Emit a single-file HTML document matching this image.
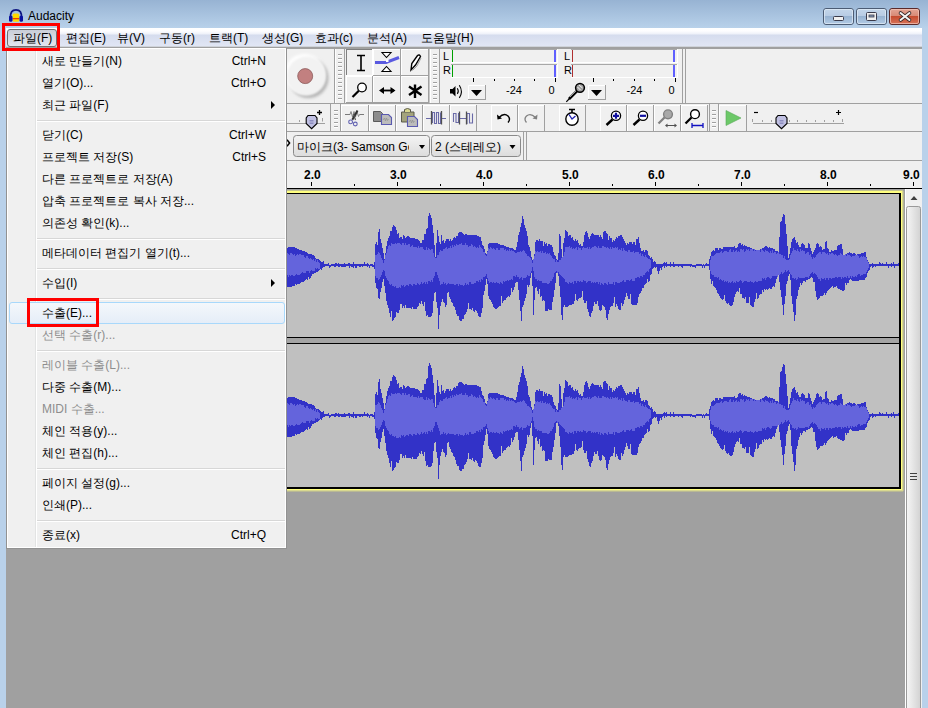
<!DOCTYPE html>
<html><head><meta charset="utf-8">
<style>
*{margin:0;padding:0;box-sizing:border-box}
html,body{width:928px;height:708px;overflow:hidden;background:#a0a0a0}
body{position:relative;font-family:"Liberation Sans",sans-serif;font-size:12px;color:#000}
.a{position:absolute}
svg text{font-family:"Liberation Sans",sans-serif}
#title{left:0;top:0;width:928px;height:28px;background:linear-gradient(#97b3d3,#b8d1ea)}
#lframe{left:0;top:28px;width:6px;height:680px;background:#b9d1ea}
#rframe{left:922px;top:28px;width:6px;height:680px;background:#b9d1ea}
#menubar{left:6px;top:28px;width:916px;height:21px;background:linear-gradient(#ffffff 0,#fdfdff 3px,#eef1f9 6px,#d5dcee 7px,#e1e6f4 18px,#cfd3da 18px,#cfd3da 19px,#a0a0a0 19px)}
.mi{position:absolute;top:31px;height:16px;line-height:15px;font-size:12px;white-space:nowrap}
#menu{left:6px;top:48px;width:281px;height:501px;background:#f0f0f0;border:1px solid #929292;border-top:none;box-shadow:inset 1px 1px 0 #fff,inset -1px -1px 0 #fff}
.it{position:absolute;left:35px;height:22px;line-height:22px;white-space:nowrap}
.sc{position:absolute;right:20px;height:22px;line-height:22px;text-align:right}
.dis{color:#8d8d8d}
.sep{position:absolute;left:30px;width:248px;height:2px;border-top:1px solid #d7d7d7;border-bottom:1px solid #fff}
.red{position:absolute;border:3px solid #f00}
</style></head><body>
<div id="title" class="a"></div>
<div id="lframe" class="a"></div>
<div id="rframe" class="a"></div>
<div class="a" style="left:28px;top:9px;font-size:12px;line-height:14px">Audacity</div>
<div id="menubar" class="a"></div>

<svg class="a" style="left:0;top:0" width="928" height="708" viewBox="0 0 928 708">
<defs>
 <linearGradient id="gbtn" x1="0" y1="0" x2="0" y2="1"><stop offset="0" stop-color="#f4f4f4"/><stop offset="1" stop-color="#dcdcdc"/></linearGradient>
 <linearGradient id="gthumb" x1="0" y1="0" x2="1" y2="0"><stop offset="0" stop-color="#f6f6f6"/><stop offset="1" stop-color="#d2d2d2"/></linearGradient>
 <radialGradient id="grec" cx="0.5" cy="0.5" r="0.5"><stop offset="0.72" stop-color="#f0f0f0"/><stop offset="0.86" stop-color="#c8c8c8"/><stop offset="1" stop-color="#f0f0f0"/></radialGradient>
 <radialGradient id="gdot" cx="0.4" cy="0.35" r="0.7"><stop offset="0" stop-color="#d89a9a"/><stop offset="1" stop-color="#b06464"/></radialGradient>
 <filter id="blur1" x="-30%" y="-30%" width="160%" height="160%"><feGaussianBlur stdDeviation="0.9"/></filter>
 <filter id="blur2" x="-30%" y="-30%" width="160%" height="160%"><feGaussianBlur stdDeviation="1.6"/></filter>
 <linearGradient id="gwb" x1="0" y1="0" x2="0" y2="1"><stop offset="0" stop-color="#c4d6ea"/><stop offset="0.45" stop-color="#b8cce4"/><stop offset="0.46" stop-color="#95b1d0"/><stop offset="1" stop-color="#b4cce6"/></linearGradient>
 <linearGradient id="gwc" x1="0" y1="0" x2="0" y2="1"><stop offset="0" stop-color="#e4a696"/><stop offset="0.45" stop-color="#d88a76"/><stop offset="0.46" stop-color="#c4482c"/><stop offset="1" stop-color="#d8765c"/></linearGradient>
</defs>
<!-- title buttons -->
<rect x="823.5" y="8.5" width="30" height="16" rx="2.5" fill="url(#gwb)" stroke="#4c5c74"/>
<rect x="824.5" y="9.5" width="28" height="14" rx="1.5" fill="none" stroke="#e2ecf6" stroke-opacity="0.7"/>
<rect x="833.5" y="16.5" width="10" height="4" rx="1" fill="#f0f0f0" stroke="#3a3a4a"/>
<rect x="856.5" y="8.5" width="30" height="16" rx="2.5" fill="url(#gwb)" stroke="#4c5c74"/>
<rect x="857.5" y="9.5" width="28" height="14" rx="1.5" fill="none" stroke="#e2ecf6" stroke-opacity="0.7"/>
<rect x="866.5" y="12.5" width="10" height="8" rx="1" fill="#f0f0f0" stroke="#3a3a4a"/>
<rect x="869" y="15" width="5" height="2" fill="#8aa0c0" stroke="#3a3a4a" stroke-width="0.8"/>
<rect x="889.5" y="8.5" width="30" height="16" rx="2.5" fill="url(#gwc)" stroke="#5a2a2a"/>
<rect x="890.5" y="9.5" width="28" height="14" rx="1.5" fill="none" stroke="#f2c8bc" stroke-opacity="0.7"/>
<path d="M900.5 13l9 7 M909.5 13l-9 7" stroke="#3a2a2a" stroke-width="3.6" stroke-linecap="round"/>
<path d="M900.5 13l9 7 M909.5 13l-9 7" stroke="#f4f4f4" stroke-width="2" stroke-linecap="round"/>
<!-- app icon -->
<path d="M10.5 18 Q10 9.8 16 9.8 Q22 9.8 21.5 18" fill="none" stroke="#0c1480" stroke-width="1.8"/>
<rect x="12.6" y="13.5" width="6.6" height="8.2" rx="1.5" fill="#ffd800"/>
<rect x="12.6" y="18" width="6.6" height="1.3" fill="#f03c00"/>
<rect x="9" y="15.5" width="3.5" height="6.2" rx="1.5" fill="#0a12a0"/>
<rect x="19.5" y="15.5" width="3.5" height="6.2" rx="1.5" fill="#0a12a0"/>
<!-- toolbar background -->
<rect x="6" y="49" width="916" height="112" fill="#f0f0f0"/>
<!-- row lines -->
<rect x="286" y="103" width="636" height="1" fill="#a0a0a0"/>
<rect x="286" y="131" width="636" height="1" fill="#a0a0a0"/>
<rect x="286" y="160" width="636" height="1" fill="#a0a0a0"/>

<!-- ROW 1 -->
<circle cx="308.5" cy="78" r="20" fill="#b4b4b4" filter="url(#blur2)"/>
<circle cx="304.5" cy="74" r="20" fill="#ffffff" filter="url(#blur2)"/>
<circle cx="306.5" cy="76" r="19.5" fill="#f2f2f2" filter="url(#blur1)"/>
<circle cx="305.2" cy="76.1" r="7.5" fill="#c28080" stroke="#8c5a5a" stroke-width="0.8"/>
<rect x="334" y="49" width="1" height="54" fill="#a0a0a0"/>
<rect x="335" y="49" width="1" height="54" fill="#fff"/>
<path d="M338 55h4v1h-4zM338 59h4v1h-4zM338 63h4v1h-4zM338 67h4v1h-4zM338 71h4v1h-4zM338 75h4v1h-4zM338 79h4v1h-4zM338 83h4v1h-4zM338 87h4v1h-4zM338 91h4v1h-4zM338 95h4v1h-4zM338 99h4v1h-4z" fill="#fff"/><path d="M338 54h4v1h-4zM338 58h4v1h-4zM338 62h4v1h-4zM338 66h4v1h-4zM338 70h4v1h-4zM338 74h4v1h-4zM338 78h4v1h-4zM338 82h4v1h-4zM338 86h4v1h-4zM338 90h4v1h-4zM338 94h4v1h-4zM338 98h4v1h-4z" fill="#a0a0a0"/>
<rect x="344" y="49" width="1" height="54" fill="#a0a0a0"/>
<!-- tools -->
<rect x="346" y="49" width="26" height="1" fill="#808080"/><rect x="346" y="49" width="1" height="26" fill="#808080"/><rect x="346" y="75" width="27" height="1" fill="#fff"/><rect x="372" y="49" width="1" height="27" fill="#fff"/><rect x="373" y="49" width="27" height="1" fill="#fff"/><rect x="373" y="49" width="1" height="26" fill="#fff"/><rect x="373" y="75" width="28" height="1" fill="#a0a0a0"/><rect x="400" y="49" width="1" height="27" fill="#a0a0a0"/><rect x="401" y="49" width="27" height="1" fill="#fff"/><rect x="401" y="49" width="1" height="26" fill="#fff"/><rect x="401" y="75" width="28" height="1" fill="#a0a0a0"/><rect x="428" y="49" width="1" height="27" fill="#a0a0a0"/><rect x="346" y="76" width="26" height="1" fill="#fff"/><rect x="346" y="76" width="1" height="26" fill="#fff"/><rect x="346" y="102" width="27" height="1" fill="#a0a0a0"/><rect x="372" y="76" width="1" height="27" fill="#a0a0a0"/><rect x="373" y="76" width="27" height="1" fill="#fff"/><rect x="373" y="76" width="1" height="26" fill="#fff"/><rect x="373" y="102" width="28" height="1" fill="#a0a0a0"/><rect x="400" y="76" width="1" height="27" fill="#a0a0a0"/><rect x="401" y="76" width="27" height="1" fill="#fff"/><rect x="401" y="76" width="1" height="26" fill="#fff"/><rect x="401" y="102" width="28" height="1" fill="#a0a0a0"/><rect x="428" y="76" width="1" height="27" fill="#a0a0a0"/>
<!-- I beam -->
<path d="M357 55.5h8 M357 70.5h8 M361 55.5v15" stroke="#000" stroke-width="1.6" fill="none"/>
<!-- envelope -->
<path d="M382 52.5h9l-4.5 5z M382 71.5h9l-4.5-5z" fill="#fff" stroke="#000" stroke-width="1.1"/>
<path d="M375 62.5 H386 L399 57.5" stroke="#5a5ae0" stroke-width="3" fill="none"/>
<rect x="386" y="59.5" width="2.5" height="2.5" fill="#fff"/>
<!-- pencil -->
<path d="M411 70 L411.8 63.5 L417.5 55.5 Q419.5 54 420.5 56.5 L415.5 65 Z" fill="#fff" stroke="#000" stroke-width="1.4"/>
<path d="M412.5 70.5 L417 66 L421 58" stroke="#909090" stroke-width="0.8" fill="none"/>
<!-- zoom -->
<circle cx="362" cy="87.5" r="4.3" fill="#fff" stroke="#000" stroke-width="1.3"/>
<path d="M352.5 97 L358.8 90.7" stroke="#000" stroke-width="2.2"/>
<!-- timeshift -->
<path d="M381 90.5h13" stroke="#000" stroke-width="1.8"/>
<path d="M379 90.5l5-3.5v7z M395.5 90.5l-5-3.5v7z" fill="#000"/>
<!-- multi -->
<path d="M415 84.5v13.5 M409 86.5l12.5 8.5 M421.5 86.5l-12.5 8.5" stroke="#000" stroke-width="2.4"/>
<rect x="428" y="49" width="1.5" height="54" fill="#a0a0a0"/>
<rect x="430" y="49" width="1" height="54" fill="#fff"/>
<path d="M433 55h4v1h-4zM433 59h4v1h-4zM433 63h4v1h-4zM433 67h4v1h-4zM433 71h4v1h-4zM433 75h4v1h-4zM433 79h4v1h-4zM433 83h4v1h-4zM433 87h4v1h-4zM433 91h4v1h-4zM433 95h4v1h-4zM433 99h4v1h-4z" fill="#fff"/><path d="M433 54h4v1h-4zM433 58h4v1h-4zM433 62h4v1h-4zM433 66h4v1h-4zM433 70h4v1h-4zM433 74h4v1h-4zM433 78h4v1h-4zM433 82h4v1h-4zM433 86h4v1h-4zM433 90h4v1h-4zM433 94h4v1h-4zM433 98h4v1h-4z" fill="#a0a0a0"/>
<rect x="439" y="49" width="1" height="54" fill="#a0a0a0"/>
<!-- meters -->
<g font-size="11px" fill="#000">
 <text x="443" y="60">L</text><text x="443" y="74">R</text>
 <text x="564" y="60">L</text><text x="564" y="74">R</text>
 <text x="506" y="93.5">-24</text><text x="548.5" y="93.5">0</text>
 <text x="626.5" y="93.5">-24</text><text x="668.5" y="93.5">0</text>
</g>
<g>
 <rect x="451" y="49" width="107" height="1" fill="#a8a8a8"/><rect x="451" y="62" width="107" height="1" fill="#fff"/>
 <rect x="451" y="64" width="107" height="1" fill="#a8a8a8"/><rect x="451" y="77" width="107" height="1" fill="#fff"/>
 <rect x="557" y="49" width="1" height="14" fill="#fff"/><rect x="557" y="64" width="1" height="14" fill="#fff"/>
 <rect x="452" y="50" width="1" height="12" fill="#00a000"/>
 <rect x="452" y="65" width="1" height="12" fill="#00a000"/>
 <rect x="554" y="50" width="2" height="12" fill="#6060ff"/>
 <rect x="554" y="65" width="2" height="12" fill="#6060ff"/>
 <rect x="571" y="49" width="107" height="1" fill="#a8a8a8"/><rect x="571" y="62" width="107" height="1" fill="#fff"/>
 <rect x="571" y="64" width="107" height="1" fill="#a8a8a8"/><rect x="571" y="77" width="107" height="1" fill="#fff"/>
 <rect x="677" y="49" width="1" height="14" fill="#fff"/><rect x="677" y="64" width="1" height="14" fill="#fff"/>
 <rect x="572" y="50" width="1" height="12" fill="#b03030"/>
 <rect x="572" y="65" width="1" height="12" fill="#b03030"/>
 <rect x="673" y="50" width="2" height="12" fill="#6060ff"/>
 <rect x="673" y="65" width="2" height="12" fill="#6060ff"/>
</g>
<g fill="#000">
 <rect x="473" y="78" width="1" height="4"/><rect x="494" y="79" width="1" height="2"/><rect x="514" y="79" width="1" height="2"/><rect x="534" y="79" width="1" height="2"/><rect x="555" y="78" width="1" height="4"/>
 <rect x="593" y="78" width="1" height="4"/><rect x="613" y="79" width="1" height="2"/><rect x="634" y="79" width="1" height="2"/><rect x="654" y="79" width="1" height="2"/><rect x="675" y="78" width="1" height="4"/>
</g>
<!-- speaker -->
<path d="M450 89h2.5l3-3v10.5l-3-3H450z" fill="#000"/>
<path d="M457.3 88.3q2 3 0 5.6 M459.3 85.3q4.2 6.5 0 12.6" stroke="#000" stroke-width="1.1" fill="none"/>
<!-- dropdown buttons -->
<rect x="468" y="85" width="18" height="15" fill="#f0f0f0"/>
<path d="M468.5 99v-13.5h17" stroke="#fff" stroke-width="1" fill="none"/>
<path d="M468 99.5h18 M485.5 85v15" stroke="#a0a0a0" stroke-width="1"/>
<path d="M471 90h11l-5.5 6z" fill="#000"/>
<rect x="588" y="85" width="18" height="15" fill="#f0f0f0"/>
<path d="M588.5 99v-13.5h17" stroke="#fff" stroke-width="1" fill="none"/>
<path d="M588 99.5h18 M605.5 85v15" stroke="#a0a0a0" stroke-width="1"/>
<path d="M591 90h11l-5.5 6z" fill="#000"/>
<!-- mic -->
<path d="M566.3 101.8 L570 98" stroke="#000" stroke-width="1.2"/>
<path d="M569 99 L577 91" stroke="#000" stroke-width="2.6"/>
<path d="M570 97 L576 91" stroke="#fff" stroke-width="0.6"/>
<circle cx="580" cy="87.8" r="4.4" fill="#a0a0a0" stroke="#000" stroke-width="1.5"/>
<path d="M577.5 87l3 3 M579 85l3.5 3" stroke="#fff" stroke-width="0.9"/>
<rect x="682" y="49" width="1" height="54" fill="#a0a0a0"/>
<rect x="685" y="49" width="1" height="54" fill="#a0a0a0"/>

<!-- ROW 2 -->
<path d="M287 123.5h38" stroke="#a0a0a0" stroke-width="1"/>
<path d="M299.5 120v2 M322.5 118v3.5" stroke="#a0a0a0"/>
<path d="M308 115.5 h7 l2 2.5 v5.5 l-5.4 5.2 l-5.4-5.2 v-5.5z" fill="#c0c0e2" stroke="#000" stroke-width="1.1"/>
<path d="M309.5 120.5h4 M309.5 122h4 M309.5 123.5h4" stroke="#8080b8" stroke-width="0.8"/>
<path d="M317 112.5h5 M319.5 110v5" stroke="#000" stroke-width="1.3"/>
<rect x="330" y="104" width="1" height="27" fill="#a0a0a0"/>
<path d="M334 111h4v1h-4zM334 115h4v1h-4zM334 119h4v1h-4zM334 123h4v1h-4zM334 127h4v1h-4z" fill="#fff"/><path d="M334 110h4v1h-4zM334 114h4v1h-4zM334 118h4v1h-4zM334 122h4v1h-4zM334 126h4v1h-4z" fill="#a0a0a0"/>
<rect x="340" y="104" width="1" height="27" fill="#a0a0a0"/>
<rect x="341" y="105" width="27" height="1" fill="#fff"/><rect x="341" y="105" width="1" height="26" fill="#fff"/><rect x="341" y="131" width="28" height="1" fill="#a0a0a0"/><rect x="368" y="105" width="1" height="27" fill="#a0a0a0"/><rect x="369" y="105" width="26" height="1" fill="#fff"/><rect x="369" y="105" width="1" height="26" fill="#fff"/><rect x="369" y="131" width="27" height="1" fill="#a0a0a0"/><rect x="395" y="105" width="1" height="27" fill="#a0a0a0"/><rect x="396" y="105" width="26" height="1" fill="#fff"/><rect x="396" y="105" width="1" height="26" fill="#fff"/><rect x="396" y="131" width="27" height="1" fill="#a0a0a0"/><rect x="422" y="105" width="1" height="27" fill="#a0a0a0"/><rect x="423" y="105" width="26" height="1" fill="#fff"/><rect x="423" y="105" width="1" height="26" fill="#fff"/><rect x="423" y="131" width="27" height="1" fill="#a0a0a0"/><rect x="449" y="105" width="1" height="27" fill="#a0a0a0"/><rect x="450" y="105" width="26" height="1" fill="#fff"/><rect x="450" y="105" width="1" height="26" fill="#fff"/><rect x="450" y="131" width="27" height="1" fill="#a0a0a0"/><rect x="476" y="105" width="1" height="27" fill="#a0a0a0"/><rect x="491" y="105" width="26" height="1" fill="#fff"/><rect x="491" y="105" width="1" height="26" fill="#fff"/><rect x="491" y="131" width="27" height="1" fill="#a0a0a0"/><rect x="517" y="105" width="1" height="27" fill="#a0a0a0"/><rect x="518" y="105" width="26" height="1" fill="#fff"/><rect x="518" y="105" width="1" height="26" fill="#fff"/><rect x="518" y="131" width="27" height="1" fill="#a0a0a0"/><rect x="544" y="105" width="1" height="27" fill="#a0a0a0"/><rect x="559" y="105" width="26" height="1" fill="#fff"/><rect x="559" y="105" width="1" height="26" fill="#fff"/><rect x="559" y="131" width="27" height="1" fill="#a0a0a0"/><rect x="585" y="105" width="1" height="27" fill="#a0a0a0"/><rect x="600" y="105" width="26" height="1" fill="#fff"/><rect x="600" y="105" width="1" height="26" fill="#fff"/><rect x="600" y="131" width="27" height="1" fill="#a0a0a0"/><rect x="626" y="105" width="1" height="27" fill="#a0a0a0"/><rect x="627" y="105" width="26" height="1" fill="#fff"/><rect x="627" y="105" width="1" height="26" fill="#fff"/><rect x="627" y="131" width="27" height="1" fill="#a0a0a0"/><rect x="653" y="105" width="1" height="27" fill="#a0a0a0"/><rect x="654" y="105" width="26" height="1" fill="#fff"/><rect x="654" y="105" width="1" height="26" fill="#fff"/><rect x="654" y="131" width="27" height="1" fill="#a0a0a0"/><rect x="680" y="105" width="1" height="27" fill="#a0a0a0"/><rect x="681" y="105" width="26" height="1" fill="#fff"/><rect x="681" y="105" width="1" height="26" fill="#fff"/><rect x="681" y="131" width="27" height="1" fill="#a0a0a0"/><rect x="707" y="105" width="1" height="27" fill="#a0a0a0"/><rect x="719" y="105" width="27" height="1" fill="#fff"/><rect x="719" y="105" width="1" height="26" fill="#fff"/><rect x="719" y="131" width="28" height="1" fill="#a0a0a0"/><rect x="746" y="105" width="1" height="27" fill="#a0a0a0"/><rect x="330" y="104" width="1" height="27" fill="#a0a0a0"/><rect x="340" y="104" width="1" height="27" fill="#a0a0a0"/><rect x="709" y="104" width="1" height="27" fill="#a0a0a0"/><rect x="718" y="104" width="1" height="27" fill="#a0a0a0"/>
<path d="M712 111h4v1h-4zM712 115h4v1h-4zM712 119h4v1h-4zM712 123h4v1h-4zM712 127h4v1h-4z" fill="#fff"/><path d="M712 110h4v1h-4zM712 114h4v1h-4zM712 118h4v1h-4zM712 122h4v1h-4zM712 126h4v1h-4z" fill="#a0a0a0"/>
<!-- cut -->
<path d="M345 114.5h5 M359.5 114.5h4.5" stroke="#7a7a7a" stroke-width="1"/>
<path d="M350 114.5 l1-3 l1.5 5.5 l1.5-5.5 l1.5 5.5 l1.5-5.5 l1.5 5 l1-2" stroke="#7a7a7a" stroke-width="0.9" fill="none"/>
<path d="M357.5 110.5 L352.3 119.8" stroke="#303030" stroke-width="2"/>
<path d="M353.5 114 L355.5 120" stroke="#505050" stroke-width="1.1"/>
<circle cx="350.6" cy="121.9" r="1.9" fill="none" stroke="#6060b0" stroke-width="1.1"/>
<circle cx="355.3" cy="124" r="1.9" fill="none" stroke="#6060b0" stroke-width="1.1"/>
<!-- copy -->
<path d="M373.5 111.5h7l2 2v8h-9z" fill="#8c8c8c" stroke="#5a5a5a" stroke-width="1"/>
<path d="M381.5 114.5h7l3 3v7h-10z" fill="#bcbcbc" stroke="#5a5ab0" stroke-width="1.1"/>
<path d="M383 120l1.5-2 1 3 1-3 1 2.5 1-1.5" stroke="#909090" stroke-width="0.7" fill="none"/>
<!-- paste -->
<path d="M401.5 112h12.5v10h-12.5z" fill="#a4a47c" stroke="#5a5a4a" stroke-width="1"/>
<path d="M404.5 112v-2.5q3-2 6 0v2.5" fill="#d8d890" stroke="#5a5a4a" stroke-width="1"/>
<path d="M407.5 116.5h7l3 3v7h-10z" fill="#bcbcbc" stroke="#5a5ab0" stroke-width="1.1"/>
<path d="M409 122l1.5-2 1 3 1-3 1 2.5 1-1.5" stroke="#909090" stroke-width="0.7" fill="none"/>
<!-- trim / silence -->
<g stroke="#6a6aa8" stroke-width="1.1" fill="none">
 <path d="M426 118.5h5.5 M441.5 118.5h4.5"/>
 <path d="M432.5 123 V112.5 H434.5 V123.5 H436.5 V112.5 H438.5 V123.5 H440.5 V112.5"/>
 <path d="M453.5 122 V113.5 H456 V122.5 H458.5 V113 M459.5 118.5H466.5 M467 124 V113.5 H469.5 V123 H472.5 V113.5"/>
</g>
<g stroke="#505050" stroke-width="1.3">
 <path d="M431.5 111v13.5 M441.5 111v13.5 M459.5 111.5v13 M466.5 111.5v13"/>
</g>
<!-- undo / redo -->
<path d="M499 117.5 q5-5 9-1.5 q3 3 0 6.5" stroke="#000" stroke-width="1.4" fill="none"/>
<path d="M497 114.5 l0.5 5 l4.5-1z" fill="#000"/>
<path d="M535.5 117.5 q-5-5 -9-1.5 q-3 3 0 6.5" stroke="#808080" stroke-width="1.3" fill="none"/>
<path d="M537.5 114.5 l-0.5 5 l-4.5-1z" fill="#808080"/>
<!-- timer -->
<circle cx="572" cy="119" r="6.2" fill="#fff" stroke="#000" stroke-width="1.4"/>
<path d="M569 109.5h6 M572 110v3" stroke="#000" stroke-width="1.6"/>
<path d="M569 114.5 l3 4.5 l3.5-3" stroke="#2020b0" stroke-width="1.3" fill="none"/>
<!-- zoom in -->
<g>
 <circle cx="616" cy="115.8" r="4.6" fill="#fff" stroke="#000" stroke-width="1.3"/>
 <path d="M606.5 125 L612.5 119.5" stroke="#000" stroke-width="2.4"/>
 <path d="M613 115.8h6 M616 112.8v6" stroke="#1010a0" stroke-width="2.2"/>
</g>
<g>
 <circle cx="643" cy="115.8" r="4.6" fill="#fff" stroke="#000" stroke-width="1.3"/>
 <path d="M633.5 125 L639.5 119.5" stroke="#000" stroke-width="2.4"/>
 <path d="M640 115.8h6" stroke="#1010a0" stroke-width="2.2"/>
</g>
<g>
 <circle cx="668" cy="114.3" r="4.4" fill="#a8a8a8" stroke="#808080" stroke-width="1.4"/>
 <path d="M658.5 123.5 L664.5 117.5" stroke="#808080" stroke-width="2.3"/>
 <path d="M666 125.5h10" stroke="#505050" stroke-width="1"/>
 <path d="M665 125.5l2.5-2v4z M677 125.5l-2.5-2v4z" fill="#505050"/>
</g>
<g>
 <circle cx="695" cy="114.2" r="4.4" fill="#fff" stroke="#000" stroke-width="1.4"/>
 <path d="M685.5 123.5 L691.5 117.5" stroke="#000" stroke-width="2.3"/>
 <path d="M692 125.5h11 M692 123v5 M703 123v5" stroke="#1010c0" stroke-width="1.3"/>
</g>
<!-- play at speed -->
<path d="M726 110.5 L741 118 L726 125.5z" fill="#6cc868" stroke="#58a858" stroke-width="0.6"/>
<path d="M753 123.5h91" stroke="#a0a0a0"/>
<path d="M752.5 119v3 M762.5 120v2 M771.5 120v2 M789.5 120v2 M797.5 120v2 M806.5 120v2 M815.5 120v2 M824.5 120v2 M833.5 120v2 M842.5 119v3" stroke="#a0a0a0"/>
<path d="M754 112.5h4" stroke="#000" stroke-width="1.2"/>
<path d="M836 112.5h5 M838.5 110v5" stroke="#000" stroke-width="1.2"/>
<path d="M778 115.5 h7 l2 2.5 v5.5 l-5.5 5.2 l-5.5-5.2 v-5.5z" fill="#c0c0e2" stroke="#000" stroke-width="1.1"/>
<path d="M779.5 120.5h4 M779.5 122h4 M779.5 123.5h4" stroke="#8080b8" stroke-width="0.8"/>

<!-- ROW 3 -->
<path d="M287 139.8 l2.6 3.2 l-2.6 3.2" stroke="#000" stroke-width="1.5" fill="none"/>
<rect x="293.5" y="135.5" width="136" height="21" rx="3" fill="url(#gbtn)" stroke="#8a8a8a"/>
<path d="M419 145h6l-3 4z" fill="#000"/>
<rect x="431.5" y="135.5" width="89" height="21" rx="3" fill="url(#gbtn)" stroke="#8a8a8a"/>
<path d="M509.5 145h6l-3 4z" fill="#000"/>
<rect x="523" y="132" width="1" height="28" fill="#a0a0a0"/>
<rect x="526" y="132" width="1" height="28" fill="#a0a0a0"/>
<defs><clipPath id="c1"><rect x="294" y="136" width="115" height="20"/></clipPath><clipPath id="c2"><rect x="432" y="136" width="72" height="20"/></clipPath></defs>
<g font-size="12px" fill="#000">
 <text x="297" y="151" clip-path="url(#c1)">마이크(3- Samson Gc</text>
 <text x="435" y="151" clip-path="url(#c2)">2 (스테레오)</text>
</g>

<!-- RULER -->
<rect x="286" y="161" width="636" height="27" fill="#f0f0f0"/>
<rect x="286" y="188" width="636" height="1" fill="#000"/>
<g font-size="12px" font-weight="bold" fill="#000">
 <text x="304" y="179">2.0</text><text x="390" y="179">3.0</text><text x="476" y="179">4.0</text><text x="562" y="179">5.0</text>
 <text x="648" y="179">6.0</text><text x="734" y="179">7.0</text><text x="820" y="179">8.0</text><text x="903" y="179">9.0</text>
</g>
<g fill="#000">
 <rect x="311" y="182" width="1" height="4"/><rect x="397" y="182" width="1" height="4"/><rect x="483" y="182" width="1" height="4"/><rect x="569" y="182" width="1" height="4"/><rect x="655" y="182" width="1" height="4"/><rect x="741" y="182" width="1" height="4"/><rect x="827" y="182" width="1" height="4"/><rect x="913" y="182" width="1" height="4"/>
 <rect x="354" y="184" width="1" height="2"/><rect x="440" y="184" width="1" height="2"/><rect x="526" y="184" width="1" height="2"/><rect x="612" y="184" width="1" height="2"/><rect x="698" y="184" width="1" height="2"/><rect x="784" y="184" width="1" height="2"/><rect x="870" y="184" width="1" height="2"/>
</g>

<!-- TRACKS -->
<g transform="translate(286,188)">
 <rect x="0" y="2" width="617" height="1" fill="#c4c48e"/>
 <rect x="0" y="3" width="616" height="2" fill="#ffff80"/>
 <rect x="0" y="5" width="615" height="1" fill="#000"/>
 <rect x="0" y="6" width="613" height="143" fill="#c0c0c0"/>
 <rect x="0" y="149" width="613" height="1" fill="#000"/>
 <rect x="0" y="150" width="613" height="5" fill="#a4a4a4"/>
 <rect x="0" y="155" width="613" height="1" fill="#000"/>
 <rect x="0" y="156" width="613" height="143" fill="#c0c0c0"/>
 <rect x="0" y="299" width="615" height="2" fill="#000"/>
 <rect x="613" y="5" width="2" height="296" fill="#000"/>
 <rect x="615" y="3" width="1" height="299" fill="#ffff80"/>
 <rect x="616" y="3" width="1" height="300" fill="#d8d890"/>
 <rect x="617" y="3" width="1" height="300" fill="#b8b894"/>
 <rect x="0" y="301" width="616" height="1" fill="#ffff80"/>
 <rect x="0" y="302" width="617" height="1" fill="#d8d890"/>
 <rect x="0" y="303" width="617" height="1" fill="#b8b894"/>
 <g transform="translate(0,6)">
  <path d="M0 53h1V94h-1zM1 54h1V93h-1zM2 53h1V93h-1zM3 53h1V93h-1zM4 53h1V93h-1zM5 53h1V93h-1zM6 53h1V92h-1zM7 53h1V92h-1zM8 53h1V92h-1zM9 54h1V90h-1zM10 54h1V91h-1zM11 55h1V90h-1zM12 55h1V90h-1zM13 56h1V90h-1zM14 56h1V89h-1zM15 56h1V88h-1zM16 57h1V88h-1zM17 57h1V88h-1zM18 57h1V87h-1zM19 58h1V86h-1zM20 58h1V85h-1zM21 59h1V86h-1zM22 60h1V83h-1zM23 60h1V85h-1zM24 60h1V84h-1zM25 60h1V82h-1zM26 61h1V80h-1zM27 61h1V80h-1zM28 62h1V79h-1zM29 64h1V79h-1zM30 65h1V78h-1zM31 65h1V78h-1zM32 65h1V77h-1zM33 66h1V76h-1zM34 67h1V75h-1zM35 68h1V76h-1zM36 68h1V74h-1zM37 67h1V73h-1zM38 70h1V73h-1zM39 70h1V72h-1zM40 70h1V72h-1zM41 70h1V72h-1zM42 69h1V72h-1zM43 71h1V74h-1zM44 71h1V73h-1zM45 70h1V72h-1zM46 70h1V72h-1zM47 70h1V72h-1zM48 70h1V73h-1zM49 69h1V73h-1zM50 69h1V72h-1zM51 70h1V72h-1zM52 69h1V73h-1zM53 70h1V73h-1zM54 70h1V72h-1zM55 70h1V73h-1zM56 70h1V73h-1zM57 70h1V73h-1zM58 69h1V73h-1zM59 70h1V73h-1zM60 70h1V72h-1zM61 70h1V72h-1zM62 69h1V72h-1zM63 69h1V74h-1zM64 70h1V72h-1zM65 70h1V73h-1zM66 70h1V73h-1zM67 68h1V74h-1zM68 70h1V72h-1zM69 70h1V74h-1zM70 70h1V74h-1zM71 70h1V72h-1zM72 70h1V72h-1zM73 70h1V73h-1zM74 70h1V73h-1zM75 70h1V72h-1zM76 70h1V73h-1zM77 70h1V72h-1zM78 68h1V72h-1zM79 70h1V72h-1zM80 70h1V72h-1zM81 69h1V73h-1zM82 70h1V72h-1zM83 71h1V74h-1zM84 70h1V72h-1zM85 70h1V72h-1zM86 70h1V73h-1zM87 71h1V73h-1zM88 68h1V75h-1zM89 50h1V89h-1zM90 48h1V94h-1zM91 51h1V95h-1zM92 38h1V104h-1zM93 35h1V105h-1zM94 45h1V98h-1zM95 49h1V94h-1zM96 54h1V88h-1zM97 59h1V85h-1zM98 65h1V92h-1zM99 59h1V99h-1zM100 52h1V107h-1zM101 47h1V111h-1zM102 44h1V114h-1zM103 42h1V119h-1zM104 37h1V123h-1zM105 37h1V117h-1zM106 33h1V127h-1zM107 31h1V126h-1zM108 32h1V124h-1zM109 33h1V123h-1zM110 36h1V118h-1zM111 40h1V119h-1zM112 39h1V119h-1zM113 44h1V116h-1zM114 43h1V110h-1zM115 43h1V110h-1zM116 45h1V114h-1zM117 41h1V112h-1zM118 42h1V114h-1zM119 44h1V111h-1zM120 43h1V114h-1zM121 42h1V114h-1zM122 42h1V114h-1zM123 43h1V114h-1zM124 44h1V114h-1zM125 44h1V115h-1zM126 44h1V113h-1zM127 44h1V115h-1zM128 44h1V115h-1zM129 45h1V115h-1zM130 45h1V115h-1zM131 45h1V113h-1zM132 46h1V112h-1zM133 47h1V109h-1zM134 49h1V110h-1zM135 49h1V107h-1zM136 46h1V110h-1zM137 46h1V112h-1zM138 40h1V108h-1zM139 40h1V117h-1zM140 35h1V122h-1zM141 34h1V121h-1zM142 22h1V123h-1zM143 19h1V123h-1zM144 21h1V123h-1zM145 24h1V122h-1zM146 31h1V119h-1zM147 39h1V107h-1zM148 51h1V99h-1zM149 63h1V98h-1zM150 49h1V108h-1zM151 36h1V114h-1zM152 42h1V135h-1zM153 48h1V121h-1zM154 50h1V112h-1zM155 41h1V108h-1zM156 47h1V105h-1zM157 46h1V108h-1zM158 49h1V109h-1zM159 47h1V113h-1zM160 45h1V111h-1zM161 45h1V99h-1zM162 45h1V98h-1zM163 47h1V103h-1zM164 45h1V105h-1zM165 47h1V108h-1zM166 46h1V109h-1zM167 44h1V112h-1zM168 43h1V113h-1zM169 44h1V116h-1zM170 42h1V120h-1zM171 42h1V122h-1zM172 39h1V122h-1zM173 38h1V126h-1zM174 38h1V127h-1zM175 38h1V127h-1zM176 39h1V125h-1zM177 40h1V125h-1zM178 41h1V121h-1zM179 40h1V120h-1zM180 40h1V118h-1zM181 41h1V115h-1zM182 41h1V109h-1zM183 41h1V115h-1zM184 41h1V115h-1zM185 41h1V116h-1zM186 41h1V114h-1zM187 41h1V117h-1zM188 41h1V118h-1zM189 41h1V116h-1zM190 41h1V117h-1zM191 42h1V119h-1zM192 42h1V122h-1zM193 43h1V123h-1zM194 43h1V123h-1zM195 47h1V119h-1zM196 51h1V114h-1zM197 52h1V101h-1zM198 55h1V97h-1zM199 59h1V91h-1zM200 60h1V85h-1zM201 57h1V90h-1zM202 50h1V102h-1zM203 49h1V105h-1zM204 49h1V106h-1zM205 49h1V108h-1zM206 49h1V110h-1zM207 49h1V113h-1zM208 49h1V114h-1zM209 49h1V115h-1zM210 49h1V115h-1zM211 49h1V114h-1zM212 50h1V113h-1zM213 50h1V112h-1zM214 51h1V112h-1zM215 51h1V102h-1zM216 51h1V109h-1zM217 51h1V107h-1zM218 52h1V106h-1zM219 52h1V106h-1zM220 53h1V104h-1zM221 53h1V103h-1zM222 53h1V102h-1zM223 54h1V103h-1zM224 54h1V101h-1zM225 54h1V94h-1zM226 54h1V98h-1zM227 55h1V96h-1zM228 56h1V93h-1zM229 56h1V89h-1zM230 53h1V88h-1zM231 48h1V88h-1zM232 41h1V96h-1zM233 38h1V106h-1zM234 33h1V117h-1zM235 29h1V127h-1zM236 22h1V113h-1zM237 25h1V111h-1zM238 31h1V107h-1zM239 34h1V104h-1zM240 37h1V100h-1zM241 42h1V91h-1zM242 51h1V93h-1zM243 53h1V91h-1zM244 57h1V84h-1zM245 63h1V79h-1zM246 66h1V92h-1zM247 65h1V121h-1zM248 60h1V106h-1zM249 48h1V94h-1zM250 46h1V93h-1zM251 46h1V97h-1zM252 47h1V100h-1zM253 45h1V95h-1zM254 47h1V103h-1zM255 47h1V102h-1zM256 47h1V107h-1zM257 52h1V106h-1zM258 48h1V107h-1zM259 50h1V117h-1zM260 49h1V117h-1zM261 52h1V117h-1zM262 50h1V115h-1zM263 50h1V116h-1zM264 51h1V116h-1zM265 51h1V116h-1zM266 53h1V108h-1zM267 58h1V103h-1zM268 61h1V96h-1zM269 62h1V89h-1zM270 65h1V79h-1zM271 66h1V79h-1zM272 59h1V82h-1zM273 40h1V92h-1zM274 42h1V103h-1zM275 55h1V121h-1zM276 63h1V126h-1zM277 49h1V113h-1zM278 44h1V111h-1zM279 36h1V113h-1zM280 37h1V113h-1zM281 38h1V113h-1zM282 42h1V112h-1zM283 41h1V111h-1zM284 41h1V111h-1zM285 44h1V111h-1zM286 43h1V110h-1zM287 46h1V110h-1zM288 47h1V107h-1zM289 45h1V100h-1zM290 47h1V106h-1zM291 46h1V107h-1zM292 49h1V105h-1zM293 51h1V104h-1zM294 50h1V104h-1zM295 52h1V103h-1zM296 52h1V97h-1zM297 48h1V106h-1zM298 41h1V109h-1zM299 38h1V109h-1zM300 37h1V107h-1zM301 39h1V115h-1zM302 43h1V118h-1zM303 45h1V122h-1zM304 42h1V123h-1zM305 40h1V119h-1zM306 39h1V117h-1zM307 40h1V112h-1zM308 41h1V108h-1zM309 41h1V110h-1zM310 41h1V110h-1zM311 41h1V107h-1zM312 41h1V112h-1zM313 43h1V116h-1zM314 41h1V117h-1zM315 43h1V116h-1zM316 45h1V111h-1zM317 38h1V112h-1zM318 37h1V113h-1zM319 37h1V116h-1zM320 39h1V124h-1zM321 40h1V126h-1zM322 46h1V120h-1zM323 42h1V116h-1zM324 44h1V113h-1zM325 44h1V112h-1zM326 48h1V112h-1zM327 46h1V109h-1zM328 47h1V103h-1zM329 45h1V113h-1zM330 43h1V110h-1zM331 44h1V112h-1zM332 42h1V115h-1zM333 42h1V116h-1zM334 41h1V116h-1zM335 41h1V109h-1zM336 43h1V112h-1zM337 45h1V110h-1zM338 47h1V106h-1zM339 49h1V103h-1zM340 51h1V99h-1zM341 49h1V102h-1zM342 50h1V105h-1zM343 48h1V105h-1zM344 48h1V100h-1zM345 48h1V110h-1zM346 50h1V111h-1zM347 48h1V111h-1zM348 48h1V111h-1zM349 51h1V111h-1zM350 45h1V111h-1zM351 45h1V109h-1zM352 43h1V103h-1zM353 49h1V100h-1zM354 54h1V99h-1zM355 57h1V97h-1zM356 57h1V94h-1zM357 56h1V94h-1zM358 58h1V91h-1zM359 56h1V90h-1zM360 56h1V89h-1zM361 57h1V85h-1zM362 61h1V88h-1zM363 62h1V87h-1zM364 64h1V81h-1zM365 63h1V80h-1zM366 65h1V75h-1zM367 68h1V74h-1zM368 67h1V73h-1zM369 68h1V74h-1zM370 70h1V73h-1zM371 70h1V77h-1zM372 70h1V80h-1zM373 70h1V77h-1zM374 70h1V74h-1zM375 70h1V76h-1zM376 70h1V73h-1zM377 69h1V72h-1zM378 68h1V74h-1zM379 69h1V72h-1zM380 68h1V73h-1zM381 70h1V72h-1zM382 70h1V72h-1zM383 70h1V72h-1zM384 68h1V73h-1zM385 70h1V72h-1zM386 70h1V72h-1zM387 68h1V73h-1zM388 70h1V73h-1zM389 70h1V72h-1zM390 70h1V72h-1zM391 70h1V72h-1zM392 70h1V73h-1zM393 70h1V72h-1zM394 70h1V72h-1zM395 70h1V73h-1zM396 70h1V74h-1zM397 70h1V72h-1zM398 70h1V72h-1zM399 70h1V72h-1zM400 70h1V72h-1zM401 70h1V72h-1zM402 70h1V72h-1zM403 70h1V72h-1zM404 70h1V73h-1zM405 70h1V72h-1zM406 71h1V73h-1zM407 71h1V73h-1zM408 71h1V73h-1zM409 71h1V74h-1zM410 70h1V72h-1zM411 70h1V72h-1zM412 70h1V72h-1zM413 70h1V72h-1zM414 70h1V72h-1zM415 70h1V72h-1zM416 71h1V74h-1zM417 70h1V72h-1zM418 71h1V74h-1zM419 70h1V72h-1zM420 69h1V72h-1zM421 70h1V72h-1zM422 70h1V72h-1zM423 65h1V76h-1zM424 62h1V85h-1zM425 58h1V90h-1zM426 57h1V87h-1zM427 56h1V92h-1zM428 57h1V93h-1zM429 54h1V94h-1zM430 54h1V96h-1zM431 54h1V99h-1zM432 56h1V100h-1zM433 54h1V102h-1zM434 54h1V104h-1zM435 55h1V105h-1zM436 55h1V106h-1zM437 53h1V105h-1zM438 53h1V101h-1zM439 53h1V107h-1zM440 53h1V109h-1zM441 53h1V110h-1zM442 53h1V109h-1zM443 53h1V111h-1zM444 53h1V112h-1zM445 53h1V112h-1zM446 53h1V111h-1zM447 53h1V108h-1zM448 52h1V103h-1zM449 54h1V100h-1zM450 54h1V98h-1zM451 53h1V97h-1zM452 50h1V98h-1zM453 49h1V94h-1zM454 49h1V100h-1zM455 51h1V100h-1zM456 50h1V104h-1zM457 52h1V104h-1zM458 51h1V105h-1zM459 52h1V103h-1zM460 52h1V109h-1zM461 53h1V109h-1zM462 53h1V109h-1zM463 53h1V103h-1zM464 54h1V111h-1zM465 54h1V112h-1zM466 55h1V113h-1zM467 55h1V113h-1zM468 55h1V108h-1zM469 56h1V105h-1zM470 56h1V99h-1zM471 56h1V105h-1zM472 56h1V104h-1zM473 56h1V101h-1zM474 55h1V100h-1zM475 55h1V100h-1zM476 54h1V96h-1zM477 54h1V98h-1zM478 53h1V95h-1zM479 52h1V96h-1zM480 52h1V95h-1zM481 53h1V96h-1zM482 54h1V95h-1zM483 53h1V94h-1zM484 54h1V95h-1zM485 54h1V95h-1zM486 54h1V93h-1zM487 55h1V92h-1zM488 55h1V93h-1zM489 57h1V89h-1zM490 57h1V85h-1zM491 57h1V83h-1zM492 58h1V81h-1zM493 43h1V88h-1zM494 28h1V96h-1zM495 27h1V103h-1zM496 23h1V111h-1zM497 20h1V121h-1zM498 21h1V110h-1zM499 30h1V102h-1zM500 40h1V90h-1zM501 52h1V87h-1zM502 64h1V82h-1zM503 60h1V80h-1zM504 54h1V86h-1zM505 48h1V102h-1zM506 45h1V110h-1zM507 44h1V118h-1zM508 43h1V127h-1zM509 46h1V121h-1zM510 49h1V105h-1zM511 48h1V102h-1zM512 51h1V96h-1zM513 53h1V93h-1zM514 53h1V89h-1zM515 50h1V91h-1zM516 49h1V89h-1zM517 50h1V87h-1zM518 51h1V87h-1zM519 54h1V88h-1zM520 54h1V86h-1zM521 54h1V86h-1zM522 49h1V85h-1zM523 50h1V85h-1zM524 54h1V84h-1zM525 57h1V83h-1zM526 60h1V84h-1zM527 58h1V88h-1zM528 56h1V88h-1zM529 54h1V97h-1zM530 50h1V103h-1zM531 49h1V106h-1zM532 50h1V105h-1zM533 53h1V104h-1zM534 52h1V102h-1zM535 53h1V102h-1zM536 56h1V102h-1zM537 55h1V101h-1zM538 55h1V99h-1zM539 48h1V101h-1zM540 47h1V99h-1zM541 54h1V97h-1zM542 55h1V96h-1zM543 58h1V95h-1zM544 58h1V94h-1zM545 56h1V93h-1zM546 57h1V92h-1zM547 57h1V94h-1zM548 56h1V93h-1zM549 56h1V93h-1zM550 56h1V92h-1zM551 52h1V94h-1zM552 51h1V95h-1zM553 51h1V95h-1zM554 50h1V96h-1zM555 50h1V96h-1zM556 55h1V97h-1zM557 61h1V97h-1zM558 61h1V96h-1zM559 60h1V89h-1zM560 60h1V91h-1zM561 59h1V89h-1zM562 59h1V89h-1zM563 58h1V86h-1zM564 59h1V85h-1zM565 59h1V86h-1zM566 60h1V87h-1zM567 59h1V87h-1zM568 59h1V87h-1zM569 60h1V87h-1zM570 61h1V87h-1zM571 60h1V87h-1zM572 60h1V87h-1zM573 60h1V86h-1zM574 60h1V86h-1zM575 59h1V86h-1zM576 59h1V86h-1zM577 59h1V86h-1zM578 58h1V86h-1zM579 58h1V84h-1zM580 63h1V83h-1zM581 66h1V79h-1zM582 68h1V77h-1zM583 70h1V76h-1zM584 70h1V73h-1zM585 70h1V72h-1zM586 69h1V74h-1zM587 70h1V73h-1zM588 70h1V72h-1zM589 70h1V73h-1zM590 70h1V72h-1zM591 70h1V72h-1zM592 70h1V72h-1zM593 68h1V72h-1zM594 69h1V72h-1zM595 70h1V72h-1zM596 69h1V72h-1zM597 70h1V72h-1zM598 70h1V72h-1zM599 70h1V72h-1zM600 68h1V72h-1zM601 70h1V72h-1zM602 70h1V74h-1zM603 70h1V72h-1zM604 70h1V72h-1zM605 69h1V73h-1zM606 70h1V72h-1zM607 68h1V72h-1zM608 70h1V74h-1zM609 70h1V72h-1zM610 70h1V72h-1zM611 70h1V72h-1zM612 69h1V72h-1z" fill="#3232c8"/>
  <path d="M0 60h1V82h-1zM1 59h1V81h-1zM2 60h1V83h-1zM3 61h1V81h-1zM4 59h1V82h-1zM5 59h1V81h-1zM6 60h1V81h-1zM7 61h1V82h-1zM8 60h1V82h-1zM9 62h1V81h-1zM10 61h1V80h-1zM11 60h1V81h-1zM12 61h1V81h-1zM13 60h1V81h-1zM14 60h1V80h-1zM15 61h1V79h-1zM16 61h1V78h-1zM17 61h1V79h-1zM18 63h1V79h-1zM19 64h1V79h-1zM20 62h1V77h-1zM21 62h1V77h-1zM22 64h1V77h-1zM23 65h1V79h-1zM24 64h1V77h-1zM25 65h1V76h-1zM26 66h1V77h-1zM27 65h1V77h-1zM28 67h1V77h-1zM29 65h1V74h-1zM30 68h1V75h-1zM31 66h1V74h-1zM32 68h1V75h-1zM33 69h1V75h-1zM89 61h1V82h-1zM90 61h1V84h-1zM91 60h1V84h-1zM92 58h1V86h-1zM93 59h1V85h-1zM94 61h1V83h-1zM95 64h1V81h-1zM96 66h1V78h-1zM97 69h1V76h-1zM98 66h1V77h-1zM99 61h1V82h-1zM100 59h1V84h-1zM101 55h1V86h-1zM102 52h1V87h-1zM103 51h1V90h-1zM104 52h1V91h-1zM105 49h1V90h-1zM106 50h1V92h-1zM107 50h1V92h-1zM108 50h1V93h-1zM109 49h1V92h-1zM110 50h1V94h-1zM111 49h1V94h-1zM112 49h1V94h-1zM113 49h1V93h-1zM114 50h1V94h-1zM115 51h1V91h-1zM116 49h1V92h-1zM117 49h1V91h-1zM118 51h1V93h-1zM119 49h1V92h-1zM120 51h1V91h-1zM121 51h1V91h-1zM122 50h1V92h-1zM123 50h1V90h-1zM124 53h1V90h-1zM125 52h1V91h-1zM126 51h1V92h-1zM127 53h1V90h-1zM128 53h1V90h-1zM129 53h1V91h-1zM130 53h1V91h-1zM131 54h1V89h-1zM132 52h1V90h-1zM133 54h1V91h-1zM134 53h1V90h-1zM135 53h1V88h-1zM136 53h1V90h-1zM137 55h1V89h-1zM138 56h1V88h-1zM139 56h1V90h-1zM140 53h1V88h-1zM141 56h1V90h-1zM142 54h1V87h-1zM143 55h1V87h-1zM144 56h1V88h-1zM145 55h1V86h-1zM146 55h1V88h-1zM147 59h1V84h-1zM148 63h1V82h-1zM149 64h1V78h-1zM150 64h1V78h-1zM151 61h1V81h-1zM152 61h1V84h-1zM153 58h1V87h-1zM154 56h1V91h-1zM155 57h1V90h-1zM156 57h1V90h-1zM157 55h1V88h-1zM158 55h1V90h-1zM159 54h1V89h-1zM160 53h1V91h-1zM161 55h1V90h-1zM162 54h1V89h-1zM163 54h1V90h-1zM164 52h1V90h-1zM165 54h1V90h-1zM166 51h1V90h-1zM167 53h1V90h-1zM168 51h1V91h-1zM169 52h1V91h-1zM170 50h1V90h-1zM171 51h1V90h-1zM172 51h1V92h-1zM173 50h1V90h-1zM174 50h1V91h-1zM175 49h1V91h-1zM176 51h1V91h-1zM177 51h1V92h-1zM178 51h1V91h-1zM179 49h1V89h-1zM180 51h1V91h-1zM181 51h1V90h-1zM182 53h1V91h-1zM183 52h1V88h-1zM184 52h1V88h-1zM185 50h1V90h-1zM186 51h1V90h-1zM187 53h1V90h-1zM188 52h1V89h-1zM189 53h1V89h-1zM190 54h1V87h-1zM191 53h1V87h-1zM192 54h1V88h-1zM193 51h1V86h-1zM194 53h1V88h-1zM195 54h1V85h-1zM196 55h1V86h-1zM197 58h1V83h-1zM198 58h1V83h-1zM199 61h1V82h-1zM200 62h1V80h-1zM201 58h1V84h-1zM202 54h1V87h-1zM203 55h1V89h-1zM204 53h1V88h-1zM205 54h1V88h-1zM206 55h1V89h-1zM207 54h1V88h-1zM208 55h1V89h-1zM209 56h1V89h-1zM210 54h1V88h-1zM211 54h1V89h-1zM212 56h1V89h-1zM213 56h1V90h-1zM214 54h1V88h-1zM215 54h1V89h-1zM216 54h1V90h-1zM217 54h1V87h-1zM218 56h1V88h-1zM219 55h1V87h-1zM220 57h1V87h-1zM221 56h1V86h-1zM222 57h1V87h-1zM223 55h1V86h-1zM224 57h1V86h-1zM225 56h1V85h-1zM226 57h1V86h-1zM227 57h1V82h-1zM228 58h1V82h-1zM229 59h1V83h-1zM230 59h1V81h-1zM231 58h1V83h-1zM232 58h1V83h-1zM233 58h1V85h-1zM234 57h1V84h-1zM235 58h1V83h-1zM236 57h1V86h-1zM237 56h1V84h-1zM238 57h1V84h-1zM239 59h1V84h-1zM240 60h1V83h-1zM241 62h1V81h-1zM242 62h1V82h-1zM243 63h1V82h-1zM244 64h1V79h-1zM245 66h1V77h-1zM246 69h1V73h-1zM247 65h1V77h-1zM248 62h1V83h-1zM249 57h1V85h-1zM250 58h1V85h-1zM251 57h1V87h-1zM252 58h1V86h-1zM253 58h1V87h-1zM254 57h1V87h-1zM255 59h1V87h-1zM256 57h1V89h-1zM257 59h1V89h-1zM258 59h1V89h-1zM259 58h1V89h-1zM260 60h1V89h-1zM261 59h1V90h-1zM262 60h1V90h-1zM263 59h1V89h-1zM264 61h1V87h-1zM265 62h1V87h-1zM266 64h1V85h-1zM267 65h1V83h-1zM268 65h1V79h-1zM269 68h1V78h-1zM270 66h1V77h-1zM271 68h1V79h-1zM272 68h1V78h-1zM273 66h1V80h-1zM274 66h1V81h-1zM275 64h1V82h-1zM276 63h1V83h-1zM277 62h1V84h-1zM278 58h1V85h-1zM279 53h1V88h-1zM280 53h1V88h-1zM281 53h1V89h-1zM282 53h1V90h-1zM283 52h1V88h-1zM284 54h1V89h-1zM285 53h1V89h-1zM286 55h1V88h-1zM287 54h1V90h-1zM288 55h1V87h-1zM289 54h1V87h-1zM290 53h1V89h-1zM291 56h1V87h-1zM292 53h1V87h-1zM293 54h1V88h-1zM294 54h1V87h-1zM295 56h1V88h-1zM296 54h1V88h-1zM297 53h1V86h-1zM298 54h1V87h-1zM299 54h1V87h-1zM300 54h1V89h-1zM301 53h1V88h-1zM302 55h1V87h-1zM303 53h1V87h-1zM304 55h1V87h-1zM305 54h1V89h-1zM306 53h1V88h-1zM307 53h1V89h-1zM308 52h1V88h-1zM309 52h1V89h-1zM310 53h1V88h-1zM311 54h1V88h-1zM312 52h1V90h-1zM313 54h1V88h-1zM314 54h1V91h-1zM315 54h1V89h-1zM316 52h1V90h-1zM317 52h1V91h-1zM318 53h1V89h-1zM319 53h1V89h-1zM320 54h1V90h-1zM321 53h1V91h-1zM322 54h1V88h-1zM323 55h1V90h-1zM324 53h1V90h-1zM325 55h1V90h-1zM326 53h1V90h-1zM327 54h1V88h-1zM328 54h1V91h-1zM329 53h1V88h-1zM330 54h1V88h-1zM331 53h1V89h-1zM332 56h1V89h-1zM333 55h1V89h-1zM334 56h1V88h-1zM335 54h1V88h-1zM336 57h1V87h-1zM337 54h1V86h-1zM338 56h1V88h-1zM339 57h1V88h-1zM340 57h1V86h-1zM341 58h1V86h-1zM342 56h1V86h-1zM343 56h1V87h-1zM344 58h1V86h-1zM345 58h1V85h-1zM346 58h1V87h-1zM347 57h1V87h-1zM348 59h1V87h-1zM349 58h1V84h-1zM350 58h1V84h-1zM351 58h1V83h-1zM352 58h1V83h-1zM353 60h1V84h-1zM354 59h1V82h-1zM355 62h1V82h-1zM356 60h1V83h-1zM357 62h1V81h-1zM358 63h1V81h-1zM359 61h1V79h-1zM360 63h1V78h-1zM361 64h1V77h-1zM362 65h1V78h-1zM363 65h1V75h-1zM364 66h1V74h-1zM424 66h1V77h-1zM425 62h1V80h-1zM426 62h1V81h-1zM427 62h1V81h-1zM428 61h1V83h-1zM429 60h1V83h-1zM430 59h1V83h-1zM431 59h1V84h-1zM432 59h1V83h-1zM433 59h1V86h-1zM434 58h1V85h-1zM435 57h1V86h-1zM436 59h1V87h-1zM437 58h1V86h-1zM438 57h1V88h-1zM439 57h1V87h-1zM440 57h1V88h-1zM441 58h1V87h-1zM442 58h1V89h-1zM443 56h1V88h-1zM444 55h1V89h-1zM445 58h1V88h-1zM446 58h1V87h-1zM447 56h1V89h-1zM448 58h1V88h-1zM449 57h1V89h-1zM450 56h1V87h-1zM451 58h1V88h-1zM452 57h1V88h-1zM453 58h1V87h-1zM454 55h1V86h-1zM455 55h1V87h-1zM456 56h1V89h-1zM457 55h1V88h-1zM458 58h1V87h-1zM459 57h1V87h-1zM460 55h1V87h-1zM461 56h1V88h-1zM462 55h1V88h-1zM463 57h1V88h-1zM464 55h1V87h-1zM465 55h1V88h-1zM466 55h1V88h-1zM467 57h1V89h-1zM468 55h1V88h-1zM469 57h1V87h-1zM470 56h1V88h-1zM471 56h1V88h-1zM472 56h1V87h-1zM473 56h1V87h-1zM474 58h1V87h-1zM475 55h1V87h-1zM476 56h1V84h-1zM477 57h1V85h-1zM478 58h1V84h-1zM479 56h1V86h-1zM480 57h1V84h-1zM481 57h1V83h-1zM482 58h1V83h-1zM483 59h1V84h-1zM484 57h1V85h-1zM485 59h1V84h-1zM486 56h1V82h-1zM487 59h1V82h-1zM488 58h1V82h-1zM489 58h1V82h-1zM490 60h1V82h-1zM491 59h1V83h-1zM492 58h1V81h-1zM493 60h1V81h-1zM494 60h1V80h-1zM495 61h1V78h-1zM496 61h1V80h-1zM497 64h1V79h-1zM498 62h1V78h-1zM499 65h1V76h-1zM500 66h1V78h-1zM501 66h1V77h-1zM502 66h1V76h-1zM503 65h1V78h-1zM504 61h1V80h-1zM505 59h1V81h-1zM506 57h1V84h-1zM507 54h1V84h-1zM508 56h1V85h-1zM509 56h1V84h-1zM510 57h1V86h-1zM511 55h1V85h-1zM512 57h1V83h-1zM513 58h1V84h-1zM514 55h1V84h-1zM515 57h1V84h-1zM516 56h1V84h-1zM517 57h1V84h-1zM518 57h1V84h-1zM519 60h1V83h-1zM520 59h1V83h-1zM521 58h1V83h-1zM522 58h1V84h-1zM523 61h1V82h-1zM524 60h1V80h-1zM525 63h1V79h-1zM526 65h1V78h-1zM527 63h1V80h-1zM528 64h1V79h-1zM529 63h1V80h-1zM530 61h1V81h-1zM531 60h1V83h-1zM532 59h1V85h-1zM533 58h1V85h-1zM534 58h1V87h-1zM535 60h1V84h-1zM536 58h1V85h-1zM537 58h1V85h-1zM538 58h1V84h-1zM539 59h1V86h-1zM540 60h1V84h-1zM541 59h1V84h-1zM542 61h1V86h-1zM543 59h1V84h-1zM544 60h1V84h-1zM545 59h1V85h-1zM546 59h1V84h-1zM547 60h1V84h-1zM548 61h1V84h-1zM549 60h1V83h-1zM550 61h1V83h-1zM551 62h1V84h-1zM552 61h1V83h-1zM553 61h1V83h-1zM554 59h1V83h-1zM555 60h1V85h-1zM556 61h1V83h-1zM557 61h1V84h-1zM558 61h1V83h-1zM559 60h1V83h-1zM560 62h1V84h-1zM561 60h1V82h-1zM562 61h1V84h-1zM563 61h1V84h-1zM564 62h1V82h-1zM565 63h1V84h-1zM566 62h1V82h-1zM567 62h1V83h-1zM568 62h1V83h-1zM569 61h1V82h-1zM570 61h1V83h-1zM571 61h1V81h-1zM572 62h1V80h-1zM573 64h1V80h-1zM574 63h1V82h-1zM575 62h1V81h-1zM576 63h1V81h-1zM577 62h1V80h-1zM578 63h1V80h-1zM579 63h1V80h-1zM580 64h1V78h-1zM581 67h1V76h-1zM582 69h1V74h-1z" fill="#6464dc"/>
 </g>
 <g transform="translate(0,156)">
  <path d="M0 53h1V94h-1zM1 54h1V93h-1zM2 53h1V93h-1zM3 53h1V93h-1zM4 53h1V93h-1zM5 53h1V93h-1zM6 53h1V92h-1zM7 53h1V92h-1zM8 53h1V92h-1zM9 54h1V90h-1zM10 54h1V91h-1zM11 55h1V90h-1zM12 55h1V90h-1zM13 56h1V90h-1zM14 56h1V89h-1zM15 56h1V88h-1zM16 57h1V88h-1zM17 57h1V88h-1zM18 57h1V87h-1zM19 58h1V86h-1zM20 58h1V85h-1zM21 59h1V86h-1zM22 60h1V83h-1zM23 60h1V85h-1zM24 60h1V84h-1zM25 60h1V82h-1zM26 61h1V80h-1zM27 61h1V80h-1zM28 62h1V79h-1zM29 64h1V79h-1zM30 65h1V78h-1zM31 65h1V78h-1zM32 65h1V77h-1zM33 66h1V76h-1zM34 67h1V75h-1zM35 68h1V76h-1zM36 68h1V74h-1zM37 67h1V73h-1zM38 70h1V73h-1zM39 70h1V72h-1zM40 70h1V72h-1zM41 70h1V72h-1zM42 69h1V72h-1zM43 71h1V74h-1zM44 71h1V73h-1zM45 70h1V72h-1zM46 70h1V72h-1zM47 70h1V72h-1zM48 70h1V73h-1zM49 69h1V73h-1zM50 69h1V72h-1zM51 70h1V72h-1zM52 69h1V73h-1zM53 70h1V73h-1zM54 70h1V72h-1zM55 70h1V73h-1zM56 70h1V73h-1zM57 70h1V73h-1zM58 69h1V73h-1zM59 70h1V73h-1zM60 70h1V72h-1zM61 70h1V72h-1zM62 69h1V72h-1zM63 69h1V74h-1zM64 70h1V72h-1zM65 70h1V73h-1zM66 70h1V73h-1zM67 68h1V74h-1zM68 70h1V72h-1zM69 70h1V74h-1zM70 70h1V74h-1zM71 70h1V72h-1zM72 70h1V72h-1zM73 70h1V73h-1zM74 70h1V73h-1zM75 70h1V72h-1zM76 70h1V73h-1zM77 70h1V72h-1zM78 68h1V72h-1zM79 70h1V72h-1zM80 70h1V72h-1zM81 69h1V73h-1zM82 70h1V72h-1zM83 71h1V74h-1zM84 70h1V72h-1zM85 70h1V72h-1zM86 70h1V73h-1zM87 71h1V73h-1zM88 68h1V75h-1zM89 50h1V89h-1zM90 48h1V94h-1zM91 51h1V95h-1zM92 38h1V104h-1zM93 35h1V105h-1zM94 45h1V98h-1zM95 49h1V94h-1zM96 54h1V88h-1zM97 59h1V85h-1zM98 65h1V92h-1zM99 59h1V99h-1zM100 52h1V107h-1zM101 47h1V111h-1zM102 44h1V114h-1zM103 42h1V119h-1zM104 37h1V123h-1zM105 37h1V117h-1zM106 33h1V127h-1zM107 31h1V126h-1zM108 32h1V124h-1zM109 33h1V123h-1zM110 36h1V118h-1zM111 40h1V119h-1zM112 39h1V119h-1zM113 44h1V116h-1zM114 43h1V110h-1zM115 43h1V110h-1zM116 45h1V114h-1zM117 41h1V112h-1zM118 42h1V114h-1zM119 44h1V111h-1zM120 43h1V114h-1zM121 42h1V114h-1zM122 42h1V114h-1zM123 43h1V114h-1zM124 44h1V114h-1zM125 44h1V115h-1zM126 44h1V113h-1zM127 44h1V115h-1zM128 44h1V115h-1zM129 45h1V115h-1zM130 45h1V115h-1zM131 45h1V113h-1zM132 46h1V112h-1zM133 47h1V109h-1zM134 49h1V110h-1zM135 49h1V107h-1zM136 46h1V110h-1zM137 46h1V112h-1zM138 40h1V108h-1zM139 40h1V117h-1zM140 35h1V122h-1zM141 34h1V121h-1zM142 22h1V123h-1zM143 19h1V123h-1zM144 21h1V123h-1zM145 24h1V122h-1zM146 31h1V119h-1zM147 39h1V107h-1zM148 51h1V99h-1zM149 63h1V98h-1zM150 49h1V108h-1zM151 36h1V114h-1zM152 42h1V135h-1zM153 48h1V121h-1zM154 50h1V112h-1zM155 41h1V108h-1zM156 47h1V105h-1zM157 46h1V108h-1zM158 49h1V109h-1zM159 47h1V113h-1zM160 45h1V111h-1zM161 45h1V99h-1zM162 45h1V98h-1zM163 47h1V103h-1zM164 45h1V105h-1zM165 47h1V108h-1zM166 46h1V109h-1zM167 44h1V112h-1zM168 43h1V113h-1zM169 44h1V116h-1zM170 42h1V120h-1zM171 42h1V122h-1zM172 39h1V122h-1zM173 38h1V126h-1zM174 38h1V127h-1zM175 38h1V127h-1zM176 39h1V125h-1zM177 40h1V125h-1zM178 41h1V121h-1zM179 40h1V120h-1zM180 40h1V118h-1zM181 41h1V115h-1zM182 41h1V109h-1zM183 41h1V115h-1zM184 41h1V115h-1zM185 41h1V116h-1zM186 41h1V114h-1zM187 41h1V117h-1zM188 41h1V118h-1zM189 41h1V116h-1zM190 41h1V117h-1zM191 42h1V119h-1zM192 42h1V122h-1zM193 43h1V123h-1zM194 43h1V123h-1zM195 47h1V119h-1zM196 51h1V114h-1zM197 52h1V101h-1zM198 55h1V97h-1zM199 59h1V91h-1zM200 60h1V85h-1zM201 57h1V90h-1zM202 50h1V102h-1zM203 49h1V105h-1zM204 49h1V106h-1zM205 49h1V108h-1zM206 49h1V110h-1zM207 49h1V113h-1zM208 49h1V114h-1zM209 49h1V115h-1zM210 49h1V115h-1zM211 49h1V114h-1zM212 50h1V113h-1zM213 50h1V112h-1zM214 51h1V112h-1zM215 51h1V102h-1zM216 51h1V109h-1zM217 51h1V107h-1zM218 52h1V106h-1zM219 52h1V106h-1zM220 53h1V104h-1zM221 53h1V103h-1zM222 53h1V102h-1zM223 54h1V103h-1zM224 54h1V101h-1zM225 54h1V94h-1zM226 54h1V98h-1zM227 55h1V96h-1zM228 56h1V93h-1zM229 56h1V89h-1zM230 53h1V88h-1zM231 48h1V88h-1zM232 41h1V96h-1zM233 38h1V106h-1zM234 33h1V117h-1zM235 29h1V127h-1zM236 22h1V113h-1zM237 25h1V111h-1zM238 31h1V107h-1zM239 34h1V104h-1zM240 37h1V100h-1zM241 42h1V91h-1zM242 51h1V93h-1zM243 53h1V91h-1zM244 57h1V84h-1zM245 63h1V79h-1zM246 66h1V92h-1zM247 65h1V121h-1zM248 60h1V106h-1zM249 48h1V94h-1zM250 46h1V93h-1zM251 46h1V97h-1zM252 47h1V100h-1zM253 45h1V95h-1zM254 47h1V103h-1zM255 47h1V102h-1zM256 47h1V107h-1zM257 52h1V106h-1zM258 48h1V107h-1zM259 50h1V117h-1zM260 49h1V117h-1zM261 52h1V117h-1zM262 50h1V115h-1zM263 50h1V116h-1zM264 51h1V116h-1zM265 51h1V116h-1zM266 53h1V108h-1zM267 58h1V103h-1zM268 61h1V96h-1zM269 62h1V89h-1zM270 65h1V79h-1zM271 66h1V79h-1zM272 59h1V82h-1zM273 40h1V92h-1zM274 42h1V103h-1zM275 55h1V121h-1zM276 63h1V126h-1zM277 49h1V113h-1zM278 44h1V111h-1zM279 36h1V113h-1zM280 37h1V113h-1zM281 38h1V113h-1zM282 42h1V112h-1zM283 41h1V111h-1zM284 41h1V111h-1zM285 44h1V111h-1zM286 43h1V110h-1zM287 46h1V110h-1zM288 47h1V107h-1zM289 45h1V100h-1zM290 47h1V106h-1zM291 46h1V107h-1zM292 49h1V105h-1zM293 51h1V104h-1zM294 50h1V104h-1zM295 52h1V103h-1zM296 52h1V97h-1zM297 48h1V106h-1zM298 41h1V109h-1zM299 38h1V109h-1zM300 37h1V107h-1zM301 39h1V115h-1zM302 43h1V118h-1zM303 45h1V122h-1zM304 42h1V123h-1zM305 40h1V119h-1zM306 39h1V117h-1zM307 40h1V112h-1zM308 41h1V108h-1zM309 41h1V110h-1zM310 41h1V110h-1zM311 41h1V107h-1zM312 41h1V112h-1zM313 43h1V116h-1zM314 41h1V117h-1zM315 43h1V116h-1zM316 45h1V111h-1zM317 38h1V112h-1zM318 37h1V113h-1zM319 37h1V116h-1zM320 39h1V124h-1zM321 40h1V126h-1zM322 46h1V120h-1zM323 42h1V116h-1zM324 44h1V113h-1zM325 44h1V112h-1zM326 48h1V112h-1zM327 46h1V109h-1zM328 47h1V103h-1zM329 45h1V113h-1zM330 43h1V110h-1zM331 44h1V112h-1zM332 42h1V115h-1zM333 42h1V116h-1zM334 41h1V116h-1zM335 41h1V109h-1zM336 43h1V112h-1zM337 45h1V110h-1zM338 47h1V106h-1zM339 49h1V103h-1zM340 51h1V99h-1zM341 49h1V102h-1zM342 50h1V105h-1zM343 48h1V105h-1zM344 48h1V100h-1zM345 48h1V110h-1zM346 50h1V111h-1zM347 48h1V111h-1zM348 48h1V111h-1zM349 51h1V111h-1zM350 45h1V111h-1zM351 45h1V109h-1zM352 43h1V103h-1zM353 49h1V100h-1zM354 54h1V99h-1zM355 57h1V97h-1zM356 57h1V94h-1zM357 56h1V94h-1zM358 58h1V91h-1zM359 56h1V90h-1zM360 56h1V89h-1zM361 57h1V85h-1zM362 61h1V88h-1zM363 62h1V87h-1zM364 64h1V81h-1zM365 63h1V80h-1zM366 65h1V75h-1zM367 68h1V74h-1zM368 67h1V73h-1zM369 68h1V74h-1zM370 70h1V73h-1zM371 70h1V77h-1zM372 70h1V80h-1zM373 70h1V77h-1zM374 70h1V74h-1zM375 70h1V76h-1zM376 70h1V73h-1zM377 69h1V72h-1zM378 68h1V74h-1zM379 69h1V72h-1zM380 68h1V73h-1zM381 70h1V72h-1zM382 70h1V72h-1zM383 70h1V72h-1zM384 68h1V73h-1zM385 70h1V72h-1zM386 70h1V72h-1zM387 68h1V73h-1zM388 70h1V73h-1zM389 70h1V72h-1zM390 70h1V72h-1zM391 70h1V72h-1zM392 70h1V73h-1zM393 70h1V72h-1zM394 70h1V72h-1zM395 70h1V73h-1zM396 70h1V74h-1zM397 70h1V72h-1zM398 70h1V72h-1zM399 70h1V72h-1zM400 70h1V72h-1zM401 70h1V72h-1zM402 70h1V72h-1zM403 70h1V72h-1zM404 70h1V73h-1zM405 70h1V72h-1zM406 71h1V73h-1zM407 71h1V73h-1zM408 71h1V73h-1zM409 71h1V74h-1zM410 70h1V72h-1zM411 70h1V72h-1zM412 70h1V72h-1zM413 70h1V72h-1zM414 70h1V72h-1zM415 70h1V72h-1zM416 71h1V74h-1zM417 70h1V72h-1zM418 71h1V74h-1zM419 70h1V72h-1zM420 69h1V72h-1zM421 70h1V72h-1zM422 70h1V72h-1zM423 65h1V76h-1zM424 62h1V85h-1zM425 58h1V90h-1zM426 57h1V87h-1zM427 56h1V92h-1zM428 57h1V93h-1zM429 54h1V94h-1zM430 54h1V96h-1zM431 54h1V99h-1zM432 56h1V100h-1zM433 54h1V102h-1zM434 54h1V104h-1zM435 55h1V105h-1zM436 55h1V106h-1zM437 53h1V105h-1zM438 53h1V101h-1zM439 53h1V107h-1zM440 53h1V109h-1zM441 53h1V110h-1zM442 53h1V109h-1zM443 53h1V111h-1zM444 53h1V112h-1zM445 53h1V112h-1zM446 53h1V111h-1zM447 53h1V108h-1zM448 52h1V103h-1zM449 54h1V100h-1zM450 54h1V98h-1zM451 53h1V97h-1zM452 50h1V98h-1zM453 49h1V94h-1zM454 49h1V100h-1zM455 51h1V100h-1zM456 50h1V104h-1zM457 52h1V104h-1zM458 51h1V105h-1zM459 52h1V103h-1zM460 52h1V109h-1zM461 53h1V109h-1zM462 53h1V109h-1zM463 53h1V103h-1zM464 54h1V111h-1zM465 54h1V112h-1zM466 55h1V113h-1zM467 55h1V113h-1zM468 55h1V108h-1zM469 56h1V105h-1zM470 56h1V99h-1zM471 56h1V105h-1zM472 56h1V104h-1zM473 56h1V101h-1zM474 55h1V100h-1zM475 55h1V100h-1zM476 54h1V96h-1zM477 54h1V98h-1zM478 53h1V95h-1zM479 52h1V96h-1zM480 52h1V95h-1zM481 53h1V96h-1zM482 54h1V95h-1zM483 53h1V94h-1zM484 54h1V95h-1zM485 54h1V95h-1zM486 54h1V93h-1zM487 55h1V92h-1zM488 55h1V93h-1zM489 57h1V89h-1zM490 57h1V85h-1zM491 57h1V83h-1zM492 58h1V81h-1zM493 43h1V88h-1zM494 28h1V96h-1zM495 27h1V103h-1zM496 23h1V111h-1zM497 20h1V121h-1zM498 21h1V110h-1zM499 30h1V102h-1zM500 40h1V90h-1zM501 52h1V87h-1zM502 64h1V82h-1zM503 60h1V80h-1zM504 54h1V86h-1zM505 48h1V102h-1zM506 45h1V110h-1zM507 44h1V118h-1zM508 43h1V127h-1zM509 46h1V121h-1zM510 49h1V105h-1zM511 48h1V102h-1zM512 51h1V96h-1zM513 53h1V93h-1zM514 53h1V89h-1zM515 50h1V91h-1zM516 49h1V89h-1zM517 50h1V87h-1zM518 51h1V87h-1zM519 54h1V88h-1zM520 54h1V86h-1zM521 54h1V86h-1zM522 49h1V85h-1zM523 50h1V85h-1zM524 54h1V84h-1zM525 57h1V83h-1zM526 60h1V84h-1zM527 58h1V88h-1zM528 56h1V88h-1zM529 54h1V97h-1zM530 50h1V103h-1zM531 49h1V106h-1zM532 50h1V105h-1zM533 53h1V104h-1zM534 52h1V102h-1zM535 53h1V102h-1zM536 56h1V102h-1zM537 55h1V101h-1zM538 55h1V99h-1zM539 48h1V101h-1zM540 47h1V99h-1zM541 54h1V97h-1zM542 55h1V96h-1zM543 58h1V95h-1zM544 58h1V94h-1zM545 56h1V93h-1zM546 57h1V92h-1zM547 57h1V94h-1zM548 56h1V93h-1zM549 56h1V93h-1zM550 56h1V92h-1zM551 52h1V94h-1zM552 51h1V95h-1zM553 51h1V95h-1zM554 50h1V96h-1zM555 50h1V96h-1zM556 55h1V97h-1zM557 61h1V97h-1zM558 61h1V96h-1zM559 60h1V89h-1zM560 60h1V91h-1zM561 59h1V89h-1zM562 59h1V89h-1zM563 58h1V86h-1zM564 59h1V85h-1zM565 59h1V86h-1zM566 60h1V87h-1zM567 59h1V87h-1zM568 59h1V87h-1zM569 60h1V87h-1zM570 61h1V87h-1zM571 60h1V87h-1zM572 60h1V87h-1zM573 60h1V86h-1zM574 60h1V86h-1zM575 59h1V86h-1zM576 59h1V86h-1zM577 59h1V86h-1zM578 58h1V86h-1zM579 58h1V84h-1zM580 63h1V83h-1zM581 66h1V79h-1zM582 68h1V77h-1zM583 70h1V76h-1zM584 70h1V73h-1zM585 70h1V72h-1zM586 69h1V74h-1zM587 70h1V73h-1zM588 70h1V72h-1zM589 70h1V73h-1zM590 70h1V72h-1zM591 70h1V72h-1zM592 70h1V72h-1zM593 68h1V72h-1zM594 69h1V72h-1zM595 70h1V72h-1zM596 69h1V72h-1zM597 70h1V72h-1zM598 70h1V72h-1zM599 70h1V72h-1zM600 68h1V72h-1zM601 70h1V72h-1zM602 70h1V74h-1zM603 70h1V72h-1zM604 70h1V72h-1zM605 69h1V73h-1zM606 70h1V72h-1zM607 68h1V72h-1zM608 70h1V74h-1zM609 70h1V72h-1zM610 70h1V72h-1zM611 70h1V72h-1zM612 69h1V72h-1z" fill="#3232c8"/>
  <path d="M0 60h1V82h-1zM1 59h1V81h-1zM2 60h1V83h-1zM3 61h1V81h-1zM4 59h1V82h-1zM5 59h1V81h-1zM6 60h1V81h-1zM7 61h1V82h-1zM8 60h1V82h-1zM9 62h1V81h-1zM10 61h1V80h-1zM11 60h1V81h-1zM12 61h1V81h-1zM13 60h1V81h-1zM14 60h1V80h-1zM15 61h1V79h-1zM16 61h1V78h-1zM17 61h1V79h-1zM18 63h1V79h-1zM19 64h1V79h-1zM20 62h1V77h-1zM21 62h1V77h-1zM22 64h1V77h-1zM23 65h1V79h-1zM24 64h1V77h-1zM25 65h1V76h-1zM26 66h1V77h-1zM27 65h1V77h-1zM28 67h1V77h-1zM29 65h1V74h-1zM30 68h1V75h-1zM31 66h1V74h-1zM32 68h1V75h-1zM33 69h1V75h-1zM89 61h1V82h-1zM90 61h1V84h-1zM91 60h1V84h-1zM92 58h1V86h-1zM93 59h1V85h-1zM94 61h1V83h-1zM95 64h1V81h-1zM96 66h1V78h-1zM97 69h1V76h-1zM98 66h1V77h-1zM99 61h1V82h-1zM100 59h1V84h-1zM101 55h1V86h-1zM102 52h1V87h-1zM103 51h1V90h-1zM104 52h1V91h-1zM105 49h1V90h-1zM106 50h1V92h-1zM107 50h1V92h-1zM108 50h1V93h-1zM109 49h1V92h-1zM110 50h1V94h-1zM111 49h1V94h-1zM112 49h1V94h-1zM113 49h1V93h-1zM114 50h1V94h-1zM115 51h1V91h-1zM116 49h1V92h-1zM117 49h1V91h-1zM118 51h1V93h-1zM119 49h1V92h-1zM120 51h1V91h-1zM121 51h1V91h-1zM122 50h1V92h-1zM123 50h1V90h-1zM124 53h1V90h-1zM125 52h1V91h-1zM126 51h1V92h-1zM127 53h1V90h-1zM128 53h1V90h-1zM129 53h1V91h-1zM130 53h1V91h-1zM131 54h1V89h-1zM132 52h1V90h-1zM133 54h1V91h-1zM134 53h1V90h-1zM135 53h1V88h-1zM136 53h1V90h-1zM137 55h1V89h-1zM138 56h1V88h-1zM139 56h1V90h-1zM140 53h1V88h-1zM141 56h1V90h-1zM142 54h1V87h-1zM143 55h1V87h-1zM144 56h1V88h-1zM145 55h1V86h-1zM146 55h1V88h-1zM147 59h1V84h-1zM148 63h1V82h-1zM149 64h1V78h-1zM150 64h1V78h-1zM151 61h1V81h-1zM152 61h1V84h-1zM153 58h1V87h-1zM154 56h1V91h-1zM155 57h1V90h-1zM156 57h1V90h-1zM157 55h1V88h-1zM158 55h1V90h-1zM159 54h1V89h-1zM160 53h1V91h-1zM161 55h1V90h-1zM162 54h1V89h-1zM163 54h1V90h-1zM164 52h1V90h-1zM165 54h1V90h-1zM166 51h1V90h-1zM167 53h1V90h-1zM168 51h1V91h-1zM169 52h1V91h-1zM170 50h1V90h-1zM171 51h1V90h-1zM172 51h1V92h-1zM173 50h1V90h-1zM174 50h1V91h-1zM175 49h1V91h-1zM176 51h1V91h-1zM177 51h1V92h-1zM178 51h1V91h-1zM179 49h1V89h-1zM180 51h1V91h-1zM181 51h1V90h-1zM182 53h1V91h-1zM183 52h1V88h-1zM184 52h1V88h-1zM185 50h1V90h-1zM186 51h1V90h-1zM187 53h1V90h-1zM188 52h1V89h-1zM189 53h1V89h-1zM190 54h1V87h-1zM191 53h1V87h-1zM192 54h1V88h-1zM193 51h1V86h-1zM194 53h1V88h-1zM195 54h1V85h-1zM196 55h1V86h-1zM197 58h1V83h-1zM198 58h1V83h-1zM199 61h1V82h-1zM200 62h1V80h-1zM201 58h1V84h-1zM202 54h1V87h-1zM203 55h1V89h-1zM204 53h1V88h-1zM205 54h1V88h-1zM206 55h1V89h-1zM207 54h1V88h-1zM208 55h1V89h-1zM209 56h1V89h-1zM210 54h1V88h-1zM211 54h1V89h-1zM212 56h1V89h-1zM213 56h1V90h-1zM214 54h1V88h-1zM215 54h1V89h-1zM216 54h1V90h-1zM217 54h1V87h-1zM218 56h1V88h-1zM219 55h1V87h-1zM220 57h1V87h-1zM221 56h1V86h-1zM222 57h1V87h-1zM223 55h1V86h-1zM224 57h1V86h-1zM225 56h1V85h-1zM226 57h1V86h-1zM227 57h1V82h-1zM228 58h1V82h-1zM229 59h1V83h-1zM230 59h1V81h-1zM231 58h1V83h-1zM232 58h1V83h-1zM233 58h1V85h-1zM234 57h1V84h-1zM235 58h1V83h-1zM236 57h1V86h-1zM237 56h1V84h-1zM238 57h1V84h-1zM239 59h1V84h-1zM240 60h1V83h-1zM241 62h1V81h-1zM242 62h1V82h-1zM243 63h1V82h-1zM244 64h1V79h-1zM245 66h1V77h-1zM246 69h1V73h-1zM247 65h1V77h-1zM248 62h1V83h-1zM249 57h1V85h-1zM250 58h1V85h-1zM251 57h1V87h-1zM252 58h1V86h-1zM253 58h1V87h-1zM254 57h1V87h-1zM255 59h1V87h-1zM256 57h1V89h-1zM257 59h1V89h-1zM258 59h1V89h-1zM259 58h1V89h-1zM260 60h1V89h-1zM261 59h1V90h-1zM262 60h1V90h-1zM263 59h1V89h-1zM264 61h1V87h-1zM265 62h1V87h-1zM266 64h1V85h-1zM267 65h1V83h-1zM268 65h1V79h-1zM269 68h1V78h-1zM270 66h1V77h-1zM271 68h1V79h-1zM272 68h1V78h-1zM273 66h1V80h-1zM274 66h1V81h-1zM275 64h1V82h-1zM276 63h1V83h-1zM277 62h1V84h-1zM278 58h1V85h-1zM279 53h1V88h-1zM280 53h1V88h-1zM281 53h1V89h-1zM282 53h1V90h-1zM283 52h1V88h-1zM284 54h1V89h-1zM285 53h1V89h-1zM286 55h1V88h-1zM287 54h1V90h-1zM288 55h1V87h-1zM289 54h1V87h-1zM290 53h1V89h-1zM291 56h1V87h-1zM292 53h1V87h-1zM293 54h1V88h-1zM294 54h1V87h-1zM295 56h1V88h-1zM296 54h1V88h-1zM297 53h1V86h-1zM298 54h1V87h-1zM299 54h1V87h-1zM300 54h1V89h-1zM301 53h1V88h-1zM302 55h1V87h-1zM303 53h1V87h-1zM304 55h1V87h-1zM305 54h1V89h-1zM306 53h1V88h-1zM307 53h1V89h-1zM308 52h1V88h-1zM309 52h1V89h-1zM310 53h1V88h-1zM311 54h1V88h-1zM312 52h1V90h-1zM313 54h1V88h-1zM314 54h1V91h-1zM315 54h1V89h-1zM316 52h1V90h-1zM317 52h1V91h-1zM318 53h1V89h-1zM319 53h1V89h-1zM320 54h1V90h-1zM321 53h1V91h-1zM322 54h1V88h-1zM323 55h1V90h-1zM324 53h1V90h-1zM325 55h1V90h-1zM326 53h1V90h-1zM327 54h1V88h-1zM328 54h1V91h-1zM329 53h1V88h-1zM330 54h1V88h-1zM331 53h1V89h-1zM332 56h1V89h-1zM333 55h1V89h-1zM334 56h1V88h-1zM335 54h1V88h-1zM336 57h1V87h-1zM337 54h1V86h-1zM338 56h1V88h-1zM339 57h1V88h-1zM340 57h1V86h-1zM341 58h1V86h-1zM342 56h1V86h-1zM343 56h1V87h-1zM344 58h1V86h-1zM345 58h1V85h-1zM346 58h1V87h-1zM347 57h1V87h-1zM348 59h1V87h-1zM349 58h1V84h-1zM350 58h1V84h-1zM351 58h1V83h-1zM352 58h1V83h-1zM353 60h1V84h-1zM354 59h1V82h-1zM355 62h1V82h-1zM356 60h1V83h-1zM357 62h1V81h-1zM358 63h1V81h-1zM359 61h1V79h-1zM360 63h1V78h-1zM361 64h1V77h-1zM362 65h1V78h-1zM363 65h1V75h-1zM364 66h1V74h-1zM424 66h1V77h-1zM425 62h1V80h-1zM426 62h1V81h-1zM427 62h1V81h-1zM428 61h1V83h-1zM429 60h1V83h-1zM430 59h1V83h-1zM431 59h1V84h-1zM432 59h1V83h-1zM433 59h1V86h-1zM434 58h1V85h-1zM435 57h1V86h-1zM436 59h1V87h-1zM437 58h1V86h-1zM438 57h1V88h-1zM439 57h1V87h-1zM440 57h1V88h-1zM441 58h1V87h-1zM442 58h1V89h-1zM443 56h1V88h-1zM444 55h1V89h-1zM445 58h1V88h-1zM446 58h1V87h-1zM447 56h1V89h-1zM448 58h1V88h-1zM449 57h1V89h-1zM450 56h1V87h-1zM451 58h1V88h-1zM452 57h1V88h-1zM453 58h1V87h-1zM454 55h1V86h-1zM455 55h1V87h-1zM456 56h1V89h-1zM457 55h1V88h-1zM458 58h1V87h-1zM459 57h1V87h-1zM460 55h1V87h-1zM461 56h1V88h-1zM462 55h1V88h-1zM463 57h1V88h-1zM464 55h1V87h-1zM465 55h1V88h-1zM466 55h1V88h-1zM467 57h1V89h-1zM468 55h1V88h-1zM469 57h1V87h-1zM470 56h1V88h-1zM471 56h1V88h-1zM472 56h1V87h-1zM473 56h1V87h-1zM474 58h1V87h-1zM475 55h1V87h-1zM476 56h1V84h-1zM477 57h1V85h-1zM478 58h1V84h-1zM479 56h1V86h-1zM480 57h1V84h-1zM481 57h1V83h-1zM482 58h1V83h-1zM483 59h1V84h-1zM484 57h1V85h-1zM485 59h1V84h-1zM486 56h1V82h-1zM487 59h1V82h-1zM488 58h1V82h-1zM489 58h1V82h-1zM490 60h1V82h-1zM491 59h1V83h-1zM492 58h1V81h-1zM493 60h1V81h-1zM494 60h1V80h-1zM495 61h1V78h-1zM496 61h1V80h-1zM497 64h1V79h-1zM498 62h1V78h-1zM499 65h1V76h-1zM500 66h1V78h-1zM501 66h1V77h-1zM502 66h1V76h-1zM503 65h1V78h-1zM504 61h1V80h-1zM505 59h1V81h-1zM506 57h1V84h-1zM507 54h1V84h-1zM508 56h1V85h-1zM509 56h1V84h-1zM510 57h1V86h-1zM511 55h1V85h-1zM512 57h1V83h-1zM513 58h1V84h-1zM514 55h1V84h-1zM515 57h1V84h-1zM516 56h1V84h-1zM517 57h1V84h-1zM518 57h1V84h-1zM519 60h1V83h-1zM520 59h1V83h-1zM521 58h1V83h-1zM522 58h1V84h-1zM523 61h1V82h-1zM524 60h1V80h-1zM525 63h1V79h-1zM526 65h1V78h-1zM527 63h1V80h-1zM528 64h1V79h-1zM529 63h1V80h-1zM530 61h1V81h-1zM531 60h1V83h-1zM532 59h1V85h-1zM533 58h1V85h-1zM534 58h1V87h-1zM535 60h1V84h-1zM536 58h1V85h-1zM537 58h1V85h-1zM538 58h1V84h-1zM539 59h1V86h-1zM540 60h1V84h-1zM541 59h1V84h-1zM542 61h1V86h-1zM543 59h1V84h-1zM544 60h1V84h-1zM545 59h1V85h-1zM546 59h1V84h-1zM547 60h1V84h-1zM548 61h1V84h-1zM549 60h1V83h-1zM550 61h1V83h-1zM551 62h1V84h-1zM552 61h1V83h-1zM553 61h1V83h-1zM554 59h1V83h-1zM555 60h1V85h-1zM556 61h1V83h-1zM557 61h1V84h-1zM558 61h1V83h-1zM559 60h1V83h-1zM560 62h1V84h-1zM561 60h1V82h-1zM562 61h1V84h-1zM563 61h1V84h-1zM564 62h1V82h-1zM565 63h1V84h-1zM566 62h1V82h-1zM567 62h1V83h-1zM568 62h1V83h-1zM569 61h1V82h-1zM570 61h1V83h-1zM571 61h1V81h-1zM572 62h1V80h-1zM573 64h1V80h-1zM574 63h1V82h-1zM575 62h1V81h-1zM576 63h1V81h-1zM577 62h1V80h-1zM578 63h1V80h-1zM579 63h1V80h-1zM580 64h1V78h-1zM581 67h1V76h-1zM582 69h1V74h-1z" fill="#6464dc"/>
 </g>
</g>

<!-- SCROLLBAR -->
<rect x="905" y="189" width="17" height="519" fill="#f0f0f0"/>
<rect x="905" y="189" width="1" height="519" fill="#fff"/>
<path d="M910.5 200h7l-3.5-4z" fill="#404040"/>
<rect x="906.5" y="206.5" width="14" height="510" rx="2" fill="url(#gthumb)" stroke="#9a9a9a"/>
<path d="M910 473.5h7 M910 476.5h7 M910 479.5h7" stroke="#404040" stroke-width="1.2"/>
</svg>

<!-- menubar items -->
<div class="a" style="left:7px;top:29px;width:50px;height:18px;border:1px solid #6f6f6f;border-radius:3px;background:linear-gradient(#c9ced8,#e3e7ef)"></div>
<div class="mi" style="left:13px">파일(F)</div>
<div class="mi" style="left:66px">편집(E)</div>
<div class="mi" style="left:117px">뷰(V)</div>
<div class="mi" style="left:159px">구동(r)</div>
<div class="mi" style="left:209px">트랙(T)</div>
<div class="mi" style="left:262px">생성(G)</div>
<div class="mi" style="left:315px">효과(c)</div>
<div class="mi" style="left:367px">분석(A)</div>
<div class="mi" style="left:421px">도움말(H)</div>

<!-- dropdown menu -->
<div id="menu" class="a">
 <div class="a" style="left:28px;top:1px;width:1px;height:498px;background:#e2e3e3"></div>
 <div class="a" style="left:29px;top:1px;width:1px;height:498px;background:#fff"></div>
 <div class="it" style="top:2px">새로 만들기(N)</div><div class="sc" style="top:2px">Ctrl+N</div>
 <div class="it" style="top:24px">열기(O)...</div><div class="sc" style="top:24px">Ctrl+O</div>
 <div class="it" style="top:46px">최근 파일(F)</div>
 <div class="a" style="left:264px;top:53px;width:0;height:0;border-left:4px solid #000;border-top:4px solid transparent;border-bottom:4px solid transparent"></div>
 <div class="sep" style="top:72px"></div>
 <div class="it" style="top:76px">닫기(C)</div><div class="sc" style="top:76px">Ctrl+W</div>
 <div class="it" style="top:98px">프로젝트 저장(S)</div><div class="sc" style="top:98px">Ctrl+S</div>
 <div class="it" style="top:120px">다른 프로젝트로 저장(A)</div>
 <div class="it" style="top:142px">압축 프로젝트로 복사 저장...</div>
 <div class="it" style="top:164px">의존성 확인(k)...</div>
 <div class="sep" style="top:190px"></div>
 <div class="it" style="top:194px">메타데이터 편집기 열기(t)...</div>
 <div class="sep" style="top:220px"></div>
 <div class="it" style="top:224px">수입(I)</div>
 <div class="a" style="left:264px;top:231px;width:0;height:0;border-left:4px solid #000;border-top:4px solid transparent;border-bottom:4px solid transparent"></div>
 <div class="sep" style="top:250px"></div>
 <div class="a" style="left:2px;top:254px;width:276px;height:22px;border:1px solid #a8d8fb;border-radius:3px;background:linear-gradient(#f4f7fb,#e5edf8)"></div>
 <div class="it" style="top:254px">수출(E)...</div>
 <div class="it dis" style="top:276px">선택 수출(r)...</div>
 <div class="sep" style="top:302px"></div>
 <div class="it dis" style="top:306px">레이블 수출(L)...</div>
 <div class="it" style="top:328px">다중 수출(M)...</div>
 <div class="it dis" style="top:350px">MIDI 수출...</div>
 <div class="it" style="top:372px">체인 적용(y)...</div>
 <div class="it" style="top:394px">체인 편집(h)...</div>
 <div class="sep" style="top:420px"></div>
 <div class="it" style="top:424px">페이지 설정(g)...</div>
 <div class="it" style="top:446px">인쇄(P)...</div>
 <div class="sep" style="top:472px"></div>
 <div class="it" style="top:476px">종료(x)</div><div class="sc" style="top:476px">Ctrl+Q</div>
</div>

<div class="red" style="left:2px;top:23px;width:58px;height:28px"></div>
<div class="red" style="left:27px;top:298px;width:72px;height:29px"></div>
</body></html>
